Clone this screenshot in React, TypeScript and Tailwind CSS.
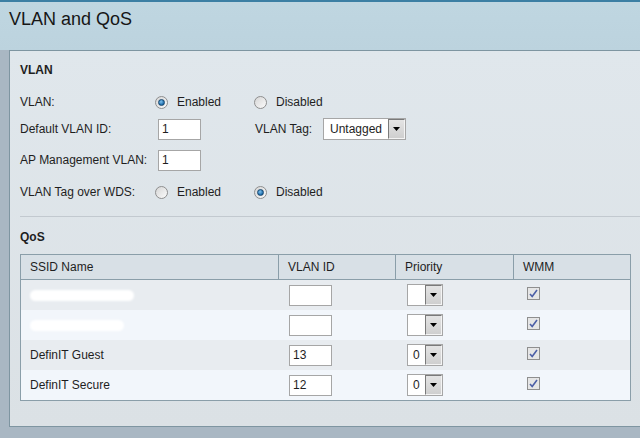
import React from "react";

function Radio({ checked }: { checked?: boolean }) {
  return (
    <span className="flex h-[13px] w-[13px] items-center justify-center rounded-full border border-[#8e8e8e] bg-gradient-to-br from-[#d6d6d6] to-[#fbfbfb]">
      {checked && <span className="h-[7px] w-[7px] rounded-full border border-[#16466e] bg-[radial-gradient(circle_at_40%_35%,#7fc2ef,#1c6aa8_70%)]" />}
    </span>
  );
}

function Arrow() {
  return (
    <span className="flex h-full w-[17px] items-center justify-center border border-t-[#7a7a7a] border-l-[#7a7a7a] border-r-[#f4f4f4] border-b-[#f4f4f4] bg-gradient-to-b from-[#e4e4e4] to-[#cfcfcf]">
      <svg width="7" height="4" viewBox="0 0 7 4">
        <path d="M0 0h7L3.5 4z" fill="#000" />
      </svg>
    </span>
  );
}

function Check() {
  return (
    <span className="flex h-[13px] w-[13px] items-center justify-center border border-[#8f8f8f] bg-[#e6e6e6]">
      <svg width="9" height="9" viewBox="0 0 9 9">
        <path d="M1 5l2.2 2.5L8 1" stroke="#4c5fa6" strokeWidth="1.6" fill="none" />
      </svg>
    </span>
  );
}

const rows = [
  { name: "", id: "", pri: "", bg: "bg-[#e8ecf0]", blob: "w-[104px]" },
  { name: "", id: "", pri: "", bg: "bg-[#f2f6fb]", blob: "w-[94px]" },
  { name: "DefinIT Guest", id: "13", pri: "0", bg: "bg-[#e8ecf0]", blob: "" },
  { name: "DefinIT Secure", id: "12", pri: "0", bg: "bg-[#f2f6fb]", blob: "" },
];

export default function App() {
  return (
    <div className="h-[438px] w-[640px] overflow-hidden bg-[#a9b7c3] font-['Liberation_Sans',Arial,sans-serif] text-[12px] text-[#1e1e1e]">
      {/* Header */}
      <div className="h-[50px] border-t-2 border-[#3c7fa4] bg-gradient-to-b from-[#bfd6e1] to-[#bcd3de] pl-[9px] pt-[6px]">
        <h1 className="text-[18px] leading-[22px] text-[#161616]">VLAN and QoS</h1>
      </div>

      {/* Panel */}
      <div className="ml-[9px] h-[377px] border-b border-l border-t border-[#7e95a1] bg-gradient-to-b from-[#e0e7ec] to-[#dbe1e5] pl-[10px]">
        <div className="flex h-[36px] items-center pt-[1px] font-bold">VLAN</div>

        <div className="flex h-[30px] items-center">
          <span className="w-[135px]">VLAN:</span>
          <label className="flex w-[99px] items-center gap-[9px]">
            <Radio checked />
            <span>Enabled</span>
          </label>
          <label className="flex items-center gap-[9px]">
            <Radio />
            <span>Disabled</span>
          </label>
        </div>

        <div className="flex h-[24px] items-center">
          <span className="w-[138px]">Default VLAN ID:</span>
          <span className="flex h-[21px] w-[43px] items-center border border-[#a6a6a6] bg-white pl-[3px]">1</span>
          <span className="ml-[54px] w-[68px]">VLAN Tag:</span>
          <span className="flex h-[22px] w-[83px] items-center border border-[#a6a6a6] bg-white">
            <span className="flex-1 pl-[6px]">Untagged</span>
            <Arrow />
          </span>
        </div>

        <div className="mt-[7px] flex h-[24px] items-center">
          <span className="w-[138px]">AP Management VLAN:</span>
          <span className="flex h-[21px] w-[43px] items-center border border-[#a6a6a6] bg-white pl-[3px]">1</span>
        </div>

        <div className="mt-[8px] flex h-[24px] items-center">
          <span className="w-[135px]">VLAN Tag over WDS:</span>
          <label className="flex w-[99px] items-center gap-[9px]">
            <Radio />
            <span>Enabled</span>
          </label>
          <label className="flex items-center gap-[9px]">
            <Radio checked />
            <span>Disabled</span>
          </label>
        </div>

        <div className="mt-[12px] border-t border-[#c2c9cf]" />

        <div className="pt-[13px] font-bold leading-[14px]">QoS</div>

        {/* Table */}
        <div className="mt-[10px] w-[611px] border border-[#8a9ea9]">
          <div className="grid h-[25px] grid-cols-[258px_117px_118px_1fr] border-b border-[#8a9ea9] bg-[#d8e0e6]">
            <div className="flex items-center border-r border-[#8a9ea9] pl-[9px]">SSID Name</div>
            <div className="flex items-center border-r border-[#8a9ea9] pl-[9px]">VLAN ID</div>
            <div className="flex items-center border-r border-[#8a9ea9] pl-[9px]">Priority</div>
            <div className="flex items-center pl-[9px]">WMM</div>
          </div>
          {rows.map((r, i) => (
            <div key={i} className={`grid h-[30px] grid-cols-[258px_117px_118px_1fr] ${r.bg}`}>
              <div className="flex items-center pl-[9px]">
                {r.name ? (
                  r.name
                ) : (
                  <span className={`h-[11px] rounded-full bg-white blur-[1px] ${r.blob}`} />
                )}
              </div>
              <div className="flex items-center pl-[10px]">
                <span className="flex h-[21px] w-[43px] items-center border border-[#a6a6a6] bg-white pl-[3px]">{r.id}</span>
              </div>
              <div className="flex items-center pl-[11px]">
                <span className="flex h-[22px] w-[36px] items-center border border-[#a6a6a6] bg-white">
                  <span className="flex-1 pl-[5px]">{r.pri}</span>
                  <Arrow />
                </span>
              </div>
              <div className="flex items-center pb-[3px] pl-[13px]">
                <Check />
              </div>
            </div>
          ))}
        </div>
      </div>
    </div>
  );
}
